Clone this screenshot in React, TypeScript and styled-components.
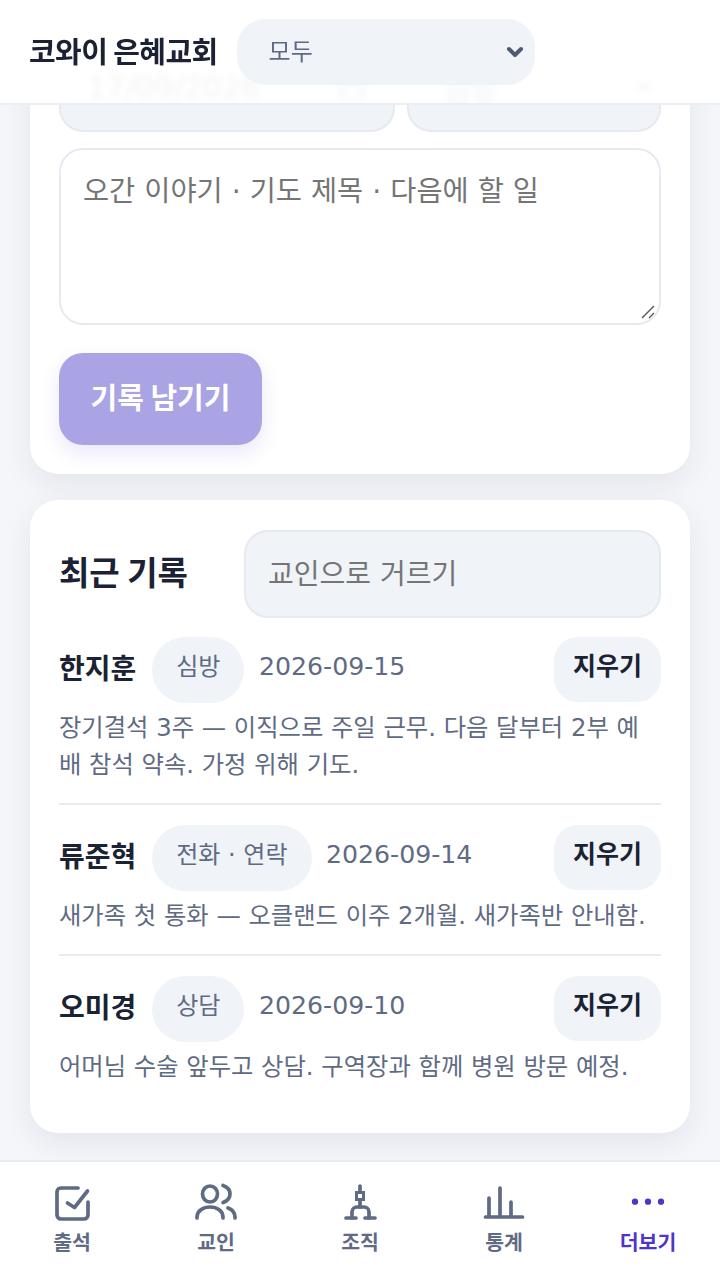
import React from "react";
import styled, { createGlobalStyle } from "styled-components";

const Global = createGlobalStyle`
  html, body { margin: 0; padding: 0; background: #f4f6fa; }
  body { font-family: "DejaVu Sans", "Noto Sans CJK KR", sans-serif; }
  * { box-sizing: border-box; }
`;

const Page = styled.div`
  position: relative;
  width: 720px;
  height: 1274px;
  overflow: hidden;
  background: #f4f6fa;
`;

const Header = styled.header`
  position: absolute;
  top: 0;
  left: 0;
  right: 0;
  height: 105px;
  z-index: 2;
  display: flex;
  align-items: flex-start;
  gap: 19px;
  padding: 19px 30px 0 29px;
  background: rgba(255, 255, 255, 0.95);
  backdrop-filter: blur(3px);
  border-bottom: 2px solid #eceef3;
`;

const Brand = styled.h1`
  margin: 0;
  height: 64px;
  line-height: 62px;
  font-size: 29px;
  font-weight: 700;
  letter-spacing: -0.6px;
  color: #1a2233;
  white-space: nowrap;
  font-family: "Noto Sans CJK KR", sans-serif;
`;

const ScopeSelect = styled.div`
  width: 298px;
  height: 66px;
  border-radius: 28px;
  background: #f0f3f8;
  display: flex;
  align-items: center;
  justify-content: space-between;
  padding: 0 8px 6px 32px;
  font-size: 24px;
  color: #5f6b84;
  font-family: "Noto Sans CJK KR", sans-serif;
`;

const Chevron = styled.svg`
  margin-top: 6px;
`;

const Content = styled.main`
  display: flex;
  flex-direction: column;
  gap: 26px;
  padding: 0 30px;
`;

const Card = styled.section`
  background: #fff;
  border-radius: 28px;
  box-shadow: 0 10px 30px rgba(26, 34, 51, 0.08);
`;

const FormCard = styled(Card)`
  height: 474px;
  border-top-left-radius: 0;
  border-top-right-radius: 0;
  padding: 64px 29px 0;
  display: flex;
  flex-direction: column;
`;

const FieldRow = styled.div`
  display: flex;
  gap: 12px;
`;

const Field = styled.div<{ $w: number; $pl: number; $pr: number }>`
  width: ${(p) => p.$w}px;
  height: 68px;
  background: #f0f3f8;
  border: 2px solid #e6e9f0;
  border-radius: 24px;
  display: flex;
  align-items: center;
  justify-content: space-between;
  padding: 0 ${(p) => p.$pr}px 22px ${(p) => p.$pl}px;
  font-size: 30px;
  color: #1a2233;
`;

const Note = styled.div`
  margin-top: 16px;
  height: 177px;
  border: 2px solid #e6e9f0;
  border-radius: 24px;
  padding: 23px 22px;
  font-size: 28.4px;
  line-height: 38px;
  color: #757575;
  position: relative;
`;

const Grip = styled.svg`
  position: absolute;
  right: 3px;
  bottom: 3px;
`;

const SubmitButton = styled.div`
  margin-top: 28px;
  width: 203px;
  height: 92px;
  border-radius: 24px;
  background: #aaa4e4;
  box-shadow: 0 8px 20px rgba(80, 60, 200, 0.12);
  color: #fff;
  font-size: 29px;
  font-weight: 700;
  display: flex;
  align-items: center;
  justify-content: center;
  padding-bottom: 7px;
  font-family: "Noto Sans CJK KR", sans-serif;
`;

const RecentCard = styled(Card)`
  height: 633px;
  padding: 30px 29px 0;
`;

const RecentHead = styled.div`
  display: flex;
  align-items: center;
  justify-content: space-between;
  margin-bottom: 19px;
`;

const RecentTitle = styled.h2`
  margin: 0;
  padding-bottom: 6px;
  font-size: 33px;
  font-weight: 700;
  color: #1a2233;
  font-family: "Noto Sans CJK KR", sans-serif;
`;

const FilterBox = styled.div`
  width: 417px;
  height: 88px;
  background: #f0f3f8;
  border: 2px solid #e6e9f0;
  border-radius: 24px;
  display: flex;
  align-items: center;
  padding: 0 0 4px 22px;
  font-size: 28px;
  color: #757575;
`;

const Entry = styled.article<{ $last?: boolean }>`
  padding-bottom: 20.5px;
  margin-bottom: 20px;
  border-bottom: ${(p) => (p.$last ? "none" : "2px solid #e9ebf0")};
`;

const EntryHead = styled.div`
  display: flex;
  align-items: flex-start;
  gap: 16px;
`;

const Person = styled.span`
  font-size: 28px;
  font-weight: 700;
  line-height: 60px;
  color: #1a2233;
  font-family: "Noto Sans CJK KR", sans-serif;
`;

const Kind = styled.span`
  height: 66px;
  line-height: 61px;
  padding: 0 24px;
  border-radius: 33px;
  background: #f0f3f8;
  color: #5f6b84;
  font-size: 24px;
`;

const DateText = styled.span`
  margin-left: -1.5px;
  font-size: 25.2px;
  line-height: 60px;
  color: #5f6b84;
`;

const DeleteButton = styled.div`
  margin-left: auto;
  width: 107px;
  height: 65px;
  border-radius: 24px;
  background: #f0f3f8;
  color: #1a2233;
  font-size: 25px;
  font-weight: 700;
  line-height: 54px;
  text-align: center;
  font-family: "Noto Sans CJK KR", sans-serif;
`;

const EntryBody = styled.p`
  margin: 5.5px 0 0;
  font-size: 24.32px;
  line-height: 37px;
  color: #5f6b84;
`;

const Nav = styled.nav`
  position: absolute;
  left: 0;
  right: 0;
  bottom: 0;
  height: 114px;
  z-index: 2;
  background: #fff;
  border-top: 2px solid #e9ebf0;
  display: grid;
  grid-template-columns: repeat(5, 1fr);
`;

const NavItem = styled.div<{ $active?: boolean }>`
  display: flex;
  flex-direction: column;
  align-items: center;
  padding-top: 21px;
  font-size: 20.5px;
  line-height: 28px;
  font-weight: 700;
  font-family: "Noto Sans CJK KR", sans-serif;
  color: ${(p) => (p.$active ? "#4f35c9" : "#5f6b84")};
`;

const Icon = ({ children }: { children: React.ReactNode }) => (
  <svg width="44" height="44" viewBox="0 0 44 44" fill="none" stroke="currentColor" strokeWidth="3.7" strokeLinecap="round" strokeLinejoin="round">
    {children}
  </svg>
);

const records = [
  { name: "한지훈", kind: "심방", date: "2026-09-15", body: "장기결석 3주 — 이직으로 주일 근무. 다음 달부터 2부 예배 참석 약속. 가정 위해 기도." },
  { name: "류준혁", kind: "전화 · 연락", date: "2026-09-14", body: "새가족 첫 통화 — 오클랜드 이주 2개월. 새가족반 안내함." },
  { name: "오미경", kind: "상담", date: "2026-09-10", body: "어머님 수술 앞두고 상담. 구역장과 함께 병원 방문 예정." },
];

export default function App() {
  return (
    <Page>
      <Global />
      <Header>
        <Brand>코와이 은혜교회</Brand>
        <ScopeSelect>
          모두
          <Chevron width="24" height="24" viewBox="0 0 24 24" fill="none" stroke="#4f5a73" strokeWidth="4" strokeLinecap="round" strokeLinejoin="round">
            <path d="M6 9l6 6 6-6" />
          </Chevron>
        </ScopeSelect>
      </Header>
      <Content>
        <FormCard>
          <FieldRow>
            <Field $w={336} $pl={26} $pr={29}>
              17/09/2026
              <svg width="24" height="24" viewBox="0 0 24 24" fill="none" stroke="#1a2233" strokeWidth="2">
                <rect x="1" y="3" width="22" height="20" rx="2" />
                <path d="M1 9h22" />
              </svg>
            </Field>
            <Field $w={254} $pl={34} $pr={8}>
              심방
              <svg width="14" height="14" viewBox="0 0 14 14" fill="none" stroke="#1a2233" strokeWidth="3">
                <path d="M2 4l5 6 5-6" />
              </svg>
            </Field>
          </FieldRow>
          <Note>
            오간 이야기 · 기도 제목 · 다음에 할 일
            <Grip width="16" height="16" viewBox="0 0 16 16" stroke="#555" strokeWidth="1.4">
              <path d="M2 14L14 2M9 14l5-5" />
            </Grip>
          </Note>
          <SubmitButton>기록 남기기</SubmitButton>
        </FormCard>
        <RecentCard>
          <RecentHead>
            <RecentTitle>최근 기록</RecentTitle>
            <FilterBox>교인으로 거르기</FilterBox>
          </RecentHead>
          {records.map((r, i) => (
            <Entry key={r.name} $last={i === records.length - 1}>
              <EntryHead>
                <Person>{r.name}</Person>
                <Kind>{r.kind}</Kind>
                <DateText>{r.date}</DateText>
                <DeleteButton>지우기</DeleteButton>
              </EntryHead>
              <EntryBody>{r.body}</EntryBody>
            </Entry>
          ))}
        </RecentCard>
      </Content>
      <Nav>
        <NavItem>
          <Icon>
            <path d="M28 5H11a4 4 0 0 0-4 4v23a4 4 0 0 0 4 4h23a4 4 0 0 0 4-4V19" />
            <path d="M17.500 20l7 4.500L37.500 8" />
          </Icon>
          출석
        </NavItem>
        <NavItem>
          <Icon>
            <ellipse cx="16" cy="11" rx="7.500" ry="8" />
            <path d="M29 2.500c4.500 1.500 7 5 7 8.500s-2.500 7-7 8.500" />
            <path d="M3 35v-1c0-6 6-10 13-10s13 4 13 10v1" />
            <path d="M34 25c4 1.500 7 5 7 9v1" />
          </Icon>
          교인
        </NavItem>
        <NavItem>
          <Icon>
            <path d="M22 3v5" />
            <rect x="18.500" y="9.500" width="7" height="7" strokeWidth="3" strokeLinejoin="miter" />
            <path d="M22 17v7" />
            <path d="M14 35v-6a5 5 0 0 1 5-5h7a5 5 0 0 1 5 5v6" />
            <path d="M8 35h10M27 35h10" />
          </Icon>
          조직
        </NavItem>
        <NavItem>
          <Icon>
            <path d="M3.500 34h37" />
            <path d="M7 33V15M18 33V5M29 33V19" />
          </Icon>
          통계
        </NavItem>
        <NavItem $active>
          <Icon>
            <circle cx="9" cy="18.700" r="1.300" fill="currentColor" />
            <circle cx="22" cy="18.700" r="1.300" fill="currentColor" />
            <circle cx="35" cy="18.700" r="1.300" fill="currentColor" />
          </Icon>
          더보기
        </NavItem>
      </Nav>
    </Page>
  );
}
